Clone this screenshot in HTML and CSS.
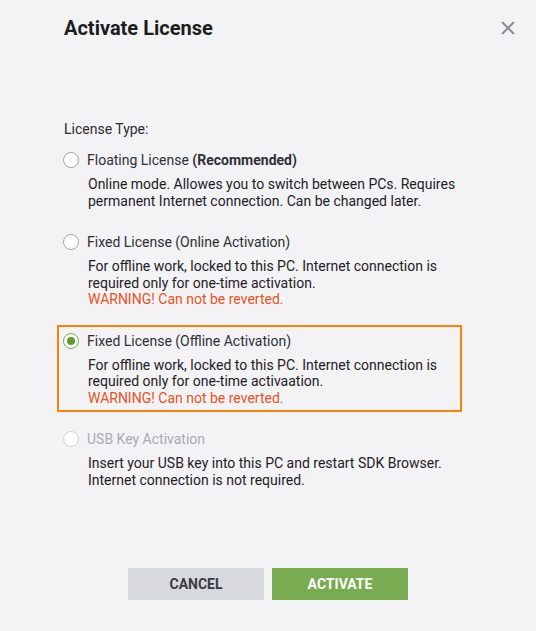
FILE: index.html
```html
<!DOCTYPE html>
<html>
<head>
<meta charset="utf-8">
<link rel="stylesheet" href="styles.css">
</head>
<body>
<div class="dialog">
  <div class="header">
    <h1 class="title">Activate License</h1>
    <button class="close" aria-label="Close">
      <svg width="14" height="14" viewBox="0 0 14 14"><path d="M1 1L13 13M13 1L1 13" stroke="#8d8f98" stroke-width="2" fill="none"/></svg>
    </button>
  </div>
  <div class="content">
    <div class="type-label">License Type:</div>
    <div class="options">
      <div class="option">
        <div class="opt-row"><span class="radio"></span><span class="opt-label">Floating License <b>(Recommended)</b></span></div>
        <div class="desc">Online mode. Allowes you to switch between PCs. Requires<br>permanent Internet connection. Can be changed later.</div>
      </div>
      <div class="option">
        <div class="opt-row"><span class="radio"></span><span class="opt-label">Fixed License (Online Activation)</span></div>
        <div class="desc">For offline work, locked to this PC. Internet connection is<br>required only for one-time activation.<br><span class="warn">WARNING! Can not be reverted.</span></div>
      </div>
      <div class="option selected">
        <div class="opt-row"><span class="radio checked"></span><span class="opt-label">Fixed License (Offline Activation)</span></div>
        <div class="desc">For offline work, locked to this PC. Internet connection is<br>required only for one-time activaation.<br><span class="warn">WARNING! Can not be reverted.</span></div>
      </div>
      <div class="option disabled">
        <div class="opt-row"><span class="radio"></span><span class="opt-label">USB Key Activation</span></div>
        <div class="desc">Insert your USB key into this PC and restart SDK Browser.<br>Internet connection is not required.</div>
      </div>
    </div>
  </div>
  <div class="footer">
    <button class="btn cancel">CANCEL</button>
    <button class="btn activate">ACTIVATE</button>
  </div>
</div>
</body>
</html>
```
FILE: styles.css
```css
html, body {
  margin: 0;
  padding: 0;
  background: #f3f3f5;
}
body {
  font-family: Roboto, "Liberation Sans", sans-serif;
  color: #26272c;
  width: 536px;
  height: 631px;
  overflow: hidden;
}
.dialog {
  display: flex;
  flex-direction: column;
}
.header {
  display: flex;
  justify-content: space-between;
  align-items: center;
  padding: 16px 21px 0 64px;
  height: 24px;
}
.title {
  margin: 0;
  font-size: 20px;
  line-height: 24px;
  font-weight: 700;
  color: #1c1d21;
}
.close {
  border: 0;
  background: none;
  padding: 0;
  width: 14px;
  height: 14px;
  display: flex;
}
.content {
  padding: 81px 80px 0 64px;
  font-size: 14px;
}
.type-label {
  line-height: 17px;
  color: #2b2c31;
}
.options {
  display: flex;
  flex-direction: column;
  gap: 23px;
  margin-top: 12px;
}
.option {
  margin-left: -1px;
}
.option.selected {
  margin: -6px -6px -6px -7px;
  padding: 4px;
  border: 2px solid #fd8307;
}
.opt-row {
  display: flex;
  align-items: center;
  gap: 9px;
  height: 20px;
}
.opt-label {
  line-height: 20px;
  color: #2f3035;
}
.opt-label b {
  font-weight: 700;
}
.radio {
  width: 14px;
  height: 14px;
  border: 1.25px solid #a4a6ac;
  border-radius: 50%;
  background: #fff;
  flex: none;
  position: relative;
  margin-right: -1px;
}
.radio.checked {
  border-color: #77ad4d;
}
.radio.checked::after {
  content: "";
  position: absolute;
  left: 3px;
  top: 3px;
  width: 8px;
  height: 8px;
  border-radius: 50%;
  background: #5d9a32;
}
.desc {
  margin-top: 6px;
  padding-left: 25px;
  line-height: 16.5px;
  color: #1f2025;
}
.warn {
  color: #ea5223;
}
.disabled .opt-label {
  color: #a9abb0;
}
.disabled .radio {
  border-color: #d2d3d7;
}
.footer {
  display: flex;
  justify-content: center;
  gap: 8px;
  margin-top: 80px;
}
.btn {
  width: 136px;
  height: 32px;
  border: 0;
  font-family: Roboto, "Liberation Sans", sans-serif;
  font-size: 14px;
  font-weight: 700;
  padding: 0;
}
.cancel {
  background: #d8d9dd;
  color: #3a3c45;
}
.activate {
  background: #79ac50;
  color: #fff;
}
```
